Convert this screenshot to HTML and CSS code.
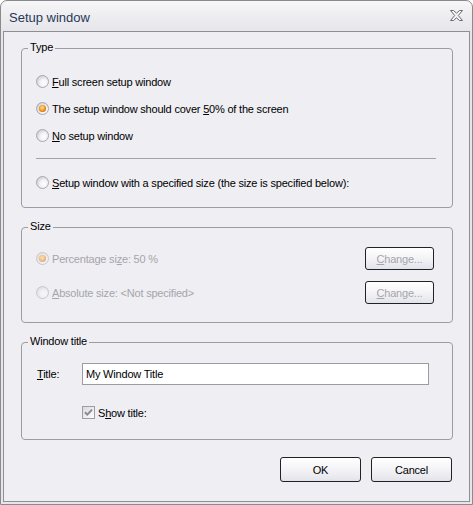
FILE: index.html
```html
<!DOCTYPE html>
<html>
<head>
<meta charset="utf-8">
<link rel="stylesheet" href="styles.css">
</head>
<body>
<svg class="defs" width="0" height="0">
  <defs>
    <radialGradient id="rfill" cx="0.62" cy="0.62" r="0.7">
      <stop offset="0" stop-color="#ffffff"/>
      <stop offset="0.45" stop-color="#f3f3f5"/>
      <stop offset="1" stop-color="#c8c8cf"/>
    </radialGradient>
    <radialGradient id="rdot" cx="0.45" cy="0.4" r="0.6">
      <stop offset="0" stop-color="#ffe2a8"/>
      <stop offset="0.55" stop-color="#f5a52a"/>
      <stop offset="1" stop-color="#d66c06"/>
    </radialGradient>
    <linearGradient id="cfill" x1="0" y1="0" x2="1" y2="1">
      <stop offset="0" stop-color="#d8d8de"/>
      <stop offset="1" stop-color="#ffffff"/>
    </linearGradient>
  </defs>
</svg>
<div class="window">
  <div class="titlebar">
    <span class="title">Setup window</span>
    <svg class="close" width="13" height="11" viewBox="0 0 13 11">
      <polygon points="0.5,0.5 3.5,0.5 6.5,3.2 9.5,0.5 12.5,0.5 8.3,5.5 12.5,10.5 9.5,10.5 6.5,7.8 3.5,10.5 0.5,10.5 4.7,5.5" fill="#f4f4f6" stroke="#6c6c70" stroke-width="1" stroke-linejoin="round"/>
    </svg>
  </div>
  <div class="client">
    <div class="group g-type">
      <span class="legend">Type</span>
      <div class="row radio-row">
        <svg class="radio" width="13" height="13" viewBox="0 0 13 13"><circle cx="6.5" cy="6.5" r="6" fill="url(#rfill)" stroke="#a8a8b0"/></svg>
        <span><u>F</u>ull screen setup window</span>
      </div>
      <div class="row radio-row">
        <svg class="radio" width="13" height="13" viewBox="0 0 13 13"><circle cx="6.5" cy="6.5" r="6" fill="url(#rfill)" stroke="#a8a8b0"/><circle cx="6.5" cy="6.5" r="3.6" fill="url(#rdot)"/></svg>
        <span>The setup window should cover <u>5</u>0% of the screen</span>
      </div>
      <div class="row radio-row">
        <svg class="radio" width="13" height="13" viewBox="0 0 13 13"><circle cx="6.5" cy="6.5" r="6" fill="url(#rfill)" stroke="#a8a8b0"/></svg>
        <span><u>N</u>o setup window</span>
      </div>
      <div class="sep"></div>
      <div class="row radio-row">
        <svg class="radio" width="13" height="13" viewBox="0 0 13 13"><circle cx="6.5" cy="6.5" r="6" fill="url(#rfill)" stroke="#a8a8b0"/></svg>
        <span><u>S</u>etup window with a specified size (the size is specified below):</span>
      </div>
    </div>

    <div class="group g-size">
      <span class="legend">Size</span>
      <div class="size-row disabled">
        <div class="radio-label">
          <svg class="radio" width="13" height="13" viewBox="0 0 13 13"><circle cx="6.5" cy="6.5" r="6" fill="url(#rfill)" stroke="#a8a8b0"/><circle cx="6.5" cy="6.5" r="3.6" fill="url(#rdot)"/></svg>
          <span>Percentage si<u>z</u>e: 50 %</span>
        </div>
        <div class="btn small"><span><u>C</u>hange...</span></div>
      </div>
      <div class="size-row disabled">
        <div class="radio-label">
          <svg class="radio" width="13" height="13" viewBox="0 0 13 13"><circle cx="6.5" cy="6.5" r="6" fill="url(#rfill)" stroke="#a8a8b0"/></svg>
          <span><u>A</u>bsolute size: &lt;Not specified&gt;</span>
        </div>
        <div class="btn small"><span><u>C</u>hange...</span></div>
      </div>
    </div>

    <div class="group g-title">
      <span class="legend">Window title</span>
      <div class="title-row">
        <span class="field-label"><u>T</u>itle:</span>
        <div class="input">My Window Title</div>
      </div>
      <div class="check-row">
        <svg class="check" width="13" height="13" viewBox="0 0 13 13">
          <rect x="0.5" y="0.5" width="12" height="12" fill="url(#cfill)" stroke="#9d9da5"/>
          <path d="M3 6.2 L5.3 8.6 L10 3.6" fill="none" stroke="#8a8a90" stroke-width="2"/>
        </svg>
        <span>S<u>h</u>ow title:</span>
      </div>
    </div>

    <div class="buttons">
      <div class="btn main">OK</div>
      <div class="btn main">Cancel</div>
    </div>
  </div>
</div>
</body>
</html>
```

FILE: styles.css
```css
* {
  box-sizing: border-box;
}

html, body {
  margin: 0;
  padding: 0;
  background: #ffffff;
}

body {
  font-family: "Liberation Sans", Arial, sans-serif;
  font-size: 11px;
  letter-spacing: -0.2px;
  color: #000000;
}

.defs {
  position: absolute;
  width: 0;
  height: 0;
}

.window {
  width: 473px;
  height: 505px;
  border: 1px solid #8a8a8e;
  border-radius: 7px 7px 0 0;
  background: linear-gradient(#f6f6f8, #e6e6ea 30px, #e6e6ea);
  display: flex;
  flex-direction: column;
}

.titlebar {
  height: 30px;
  flex: none;
  display: flex;
  align-items: center;
  justify-content: space-between;
  padding: 2px 9px 0 8px;
}

.title {
  font-size: 13px;
  letter-spacing: 0;
  color: #26385a;
}

.close {
  display: block;
  margin-top: -3px;
}

.client {
  flex: 1;
  margin: 0 2px 2px 2px;
  border: 1px solid #8e8e94;
  background: #eeeef3;
  padding: 16px 16px 0 17px;
  display: flex;
  flex-direction: column;
}

.group {
  position: relative;
  border: 1px solid #9c9ca3;
  border-radius: 4px;
  margin-bottom: 19px;
}

.legend {
  position: absolute;
  top: -8px;
  left: 6px;
  padding: 0 2px;
  line-height: 13px;
  background: #eeeef3;
}

.g-type {
  padding: 19px 16px 11px 14px;
}

.row {
  height: 27px;
  display: flex;
  align-items: center;
}

.radio {
  display: block;
  flex: none;
  margin-right: 3px;
}

.sep {
  height: 1px;
  margin: 9px 0 10px 0;
  background: #a3a3a9;
}

.g-size {
  padding: 19px 18px 18px 14px;
  display: flex;
  flex-direction: column;
  gap: 11px;
}

.size-row {
  height: 23px;
  display: flex;
  align-items: center;
  justify-content: space-between;
}

.radio-label {
  display: flex;
  align-items: center;
}

.disabled {
  color: #a6a5aa;
}

.disabled .radio {
  opacity: 0.55;
}

.btn {
  border: 1px solid #1f2226;
  border-radius: 3px;
  background: linear-gradient(#ffffff, #f5f5f8 45%, #e3e3eb);
  display: flex;
  align-items: center;
  justify-content: center;
}

.btn.small {
  width: 69px;
  height: 23px;
}

.g-title {
  padding: 20px 23px 20px 15px;
  margin-bottom: 17px;
}

.title-row {
  display: flex;
  align-items: center;
  height: 22px;
}

.field-label {
  width: 45px;
  flex: none;
}

.input {
  flex: 1;
  height: 22px;
  border: 1px solid #9b9ba2;
  background: #ffffff;
  padding-left: 3px;
  display: flex;
  align-items: center;
}

.check-row {
  margin-top: 21px;
  height: 13px;
  padding-left: 45px;
  display: flex;
  align-items: center;
}

.check {
  display: block;
  flex: none;
  margin-right: 3px;
}

.buttons {
  display: flex;
  justify-content: flex-end;
  gap: 10px;
  padding-right: 1px;
}

.btn.main {
  width: 81px;
  height: 25px;
}
```
